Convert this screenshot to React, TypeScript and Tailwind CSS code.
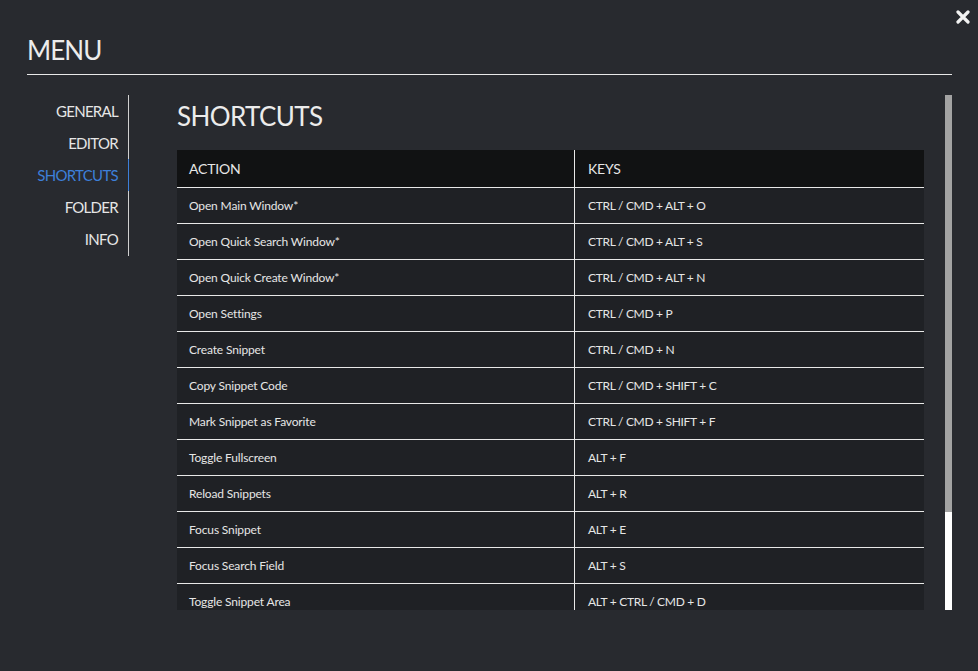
import React from "react";

const shortcuts: [string, string][] = [
  ["Open Main Window*", "CTRL / CMD + ALT + O"],
  ["Open Quick Search Window*", "CTRL / CMD + ALT + S"],
  ["Open Quick Create Window*", "CTRL / CMD + ALT + N"],
  ["Open Settings", "CTRL / CMD + P"],
  ["Create Snippet", "CTRL / CMD + N"],
  ["Copy Snippet Code", "CTRL / CMD + SHIFT + C"],
  ["Mark Snippet as Favorite", "CTRL / CMD + SHIFT + F"],
  ["Toggle Fullscreen", "ALT + F"],
  ["Reload Snippets", "ALT + R"],
  ["Focus Snippet", "ALT + E"],
  ["Focus Search Field", "ALT + S"],
  ["Toggle Snippet Area", "ALT + CTRL / CMD + D"],
];

const nav = ["GENERAL", "EDITOR", "SHORTCUTS", "FOLDER", "INFO"];

export default function App() {
  return (
    <div className="relative h-[671px] w-full overflow-hidden bg-[#282a2f] font-['Lato','Liberation_Sans',sans-serif] text-[#e6e6e6]">
      {/* close */}
      <button className="absolute right-[8px] top-[10px] text-white">
        <svg width="14" height="14" viewBox="0 0 14 14">
          <path d="M2 2 L12 12 M12 2 L2 12" stroke="#f2f2f2" strokeWidth="3.2" strokeLinecap="round" />
        </svg>
      </button>

      <div className="pl-[27px] pr-[26px] pt-[34px]">
        <h1 className="border-b border-[#e8e8e8] pb-[8px] text-[26px] leading-[32px] tracking-[-0.9px] text-[#ececec]">MENU</h1>

        <div className="mt-[20px] flex h-[515px]">
          <nav className="w-[102px] shrink-0 self-start border-r border-[#d0d0d0] pb-px">
            {nav.map((n) => (
              <div
                key={n}
                className={
                  n === "SHORTCUTS"
                    ? "-mr-px border-r border-[#3d7fd9] pr-[10px] text-right text-[15px] leading-[32px] tracking-[-0.7px] text-[#3d7fd9]"
                    : "pr-[10px] text-right text-[15px] leading-[32px] tracking-[-0.7px] text-[#e6e6e6]"
                }
              >
                {n}
              </div>
            ))}
          </nav>

          <main className="ml-[48px] w-[747px] overflow-hidden">
            <h2 className="pt-[5px] text-[26px] leading-[32px] tracking-[-0.6px] text-[#ececec]">SHORTCUTS</h2>
            <div className="mt-[18px]">
              <div className="flex h-[38px] items-center border-b border-[#e8e8e8] bg-[#111213] text-[14px] tracking-[-0.2px]">
                <div className="flex h-full w-[398px] items-center border-r border-[#e8e8e8] pl-[12px]">ACTION</div>
                <div className="pl-[13px]">KEYS</div>
              </div>
              {shortcuts.map(([a, k]) => (
                <div key={a} className="flex h-[36px] items-center border-b border-[#e8e8e8] bg-[#1f2125] text-[12px] tracking-[-0.15px]">
                  <div className="flex h-full w-[398px] items-center border-r border-[#e8e8e8] pl-[12px]">{a}</div>
                  <div className="pl-[13px] tracking-[-0.3px]">{k}</div>
                </div>
              ))}
            </div>
          </main>

          <div className="ml-[21px] flex w-[7px] flex-col bg-[#a3a3a3]">
            <div className="mt-auto h-[98px] bg-white" />
          </div>
        </div>
      </div>
    </div>
  );
}
